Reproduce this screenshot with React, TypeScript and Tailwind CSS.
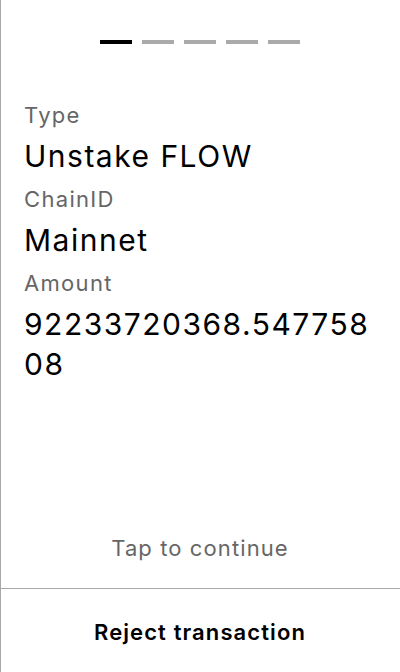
export default function App() {
  const fields = [
    { label: 'Type', value: 'Unstake FLOW' },
    { label: 'ChainID', value: 'Mainnet' },
    { label: 'Amount', value: '92233720368.54775808' },
  ]
  return (
    <div
      className="h-[672px] w-[400px] bg-white shadow-[inset_1px_0_0_#a8a8a8] flex flex-col"
      style={{ fontFamily: 'Inter, "Noto Sans", sans-serif' }}
    >
      {/* progress */}
      <div className="flex justify-center gap-[10px] pt-10">
        <div className="h-1 w-8 bg-black" />
        <div className="h-1 w-8 bg-[#aaaaaa]" />
        <div className="h-1 w-8 bg-[#aaaaaa]" />
        <div className="h-1 w-8 bg-[#aaaaaa]" />
        <div className="h-1 w-8 bg-[#aaaaaa]" />
      </div>

      <div className="flex flex-col gap-[9px] pl-6 pr-4 pt-[57px]">
        {fields.map(f => (
          <div key={f.label}>
            <p className="text-[22px] leading-[28px] tracking-[0.06em] text-[#666666] mb-[7px]">{f.label}</p>
            <p className="text-[30px] leading-[40px] tracking-[0.05em] text-black break-all">{f.value}</p>
          </div>
        ))}
      </div>

      <div className="flex-1" />
      <p className="text-center text-[22px] leading-[28px] tracking-[0.05em] text-[#666666] mb-[26px]">Tap to continue</p>
      <div className="h-[84px] border-t border-[#a8a8a8] flex items-center justify-center pt-[3px]">
        <span className="text-[22px] font-semibold tracking-[0.05em] text-black">Reject transaction</span>
      </div>
    </div>
  )
}
